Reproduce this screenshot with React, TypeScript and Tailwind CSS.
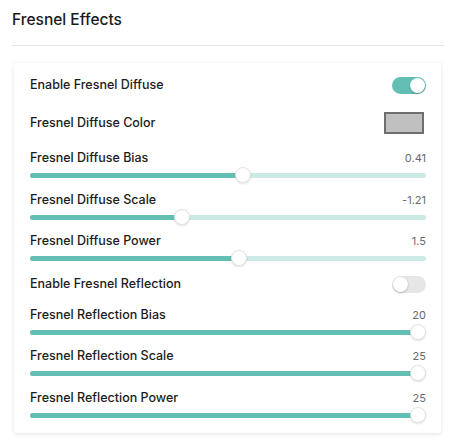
import React, { useState } from "react";

// ==== Types ====
type SliderProps = {
  label: string;
  value: number;
  pct: number; // 0..1 position of the thumb
  className?: string; // spacing above the row
};

// ==== Pieces ====
const Toggle: React.FC<{ on: boolean; onChange: () => void }> = ({ on, onChange }) => (
  <button
    onClick={onChange}
    className={`relative h-[17px] w-[34px] rounded-full ${on ? "bg-[#63bfb3]" : "bg-[#e6e6e6]"}`}
  >
    <span
      className={`absolute top-[1px] h-[15px] w-[15px] rounded-full bg-white shadow-[0_1px_2px_rgba(0,0,0,0.25)] ${
        on ? "left-[18px]" : "left-[1px]"
      }`}
    />
  </button>
);

const Slider: React.FC<SliderProps> = ({ label, value, pct, className }) => (
  <div className={className}>
    <div className="flex h-4 items-center justify-between">
      <span className="text-[12.5px] font-medium text-[#1c1c1c]">{label}</span>
      <span className="text-[11px] text-[#6b6b6b]">{value}</span>
    </div>
    <div className="relative mt-px h-4">
      <div className="absolute left-0 right-0 top-[5.5px] h-[5px] rounded-full bg-[#cbe9e5]" />
      <div
        className="absolute left-0 top-[5.5px] h-[5px] rounded-full bg-[#63bfb3]"
        style={{ width: `calc(${pct} * (100% - 16px) + 8px)` }}
      />
      <div
        className="absolute top-0 h-4 w-4 rounded-full border border-[#e2e2e2] bg-white shadow-[0_1px_2px_rgba(0,0,0,0.12)]"
        style={{ left: `calc(${pct} * (100% - 16px))` }}
      />
    </div>
  </div>
);

// ==== Component ====
export default function App() {
  const [diffuse, setDiffuse] = useState(true);
  const [reflection, setReflection] = useState(false);

  return (
    <div
      className="min-h-screen bg-white pl-3 pr-[14px] pt-[10px]"
      style={{ fontFamily: "Inter, 'Liberation Sans', sans-serif" }}
    >
      <h2 className="text-[15.5px] font-medium leading-5 text-[#1a1a1a]">Fresnel Effects</h2>
      <div className="mt-[15px] h-px bg-[#e4e4e4]" />

      <div className="ml-[2px] mr-[3px] mt-[17px] flex flex-col rounded-[3px] bg-white pb-[10px] pl-4 pr-[15px] pt-3 shadow-[0_1px_4px_rgba(0,0,0,0.12)]">
        <div className="flex h-5 items-center justify-between">
          <span className="text-[12.5px] font-medium text-[#1c1c1c]">Enable Fresnel Diffuse</span>
          <Toggle on={diffuse} onChange={() => setDiffuse(!diffuse)} />
        </div>

        <div className="mt-[17px] flex h-[22px] items-center justify-between">
          <span className="text-[12.5px] font-medium text-[#1c1c1c]">Fresnel Diffuse Color</span>
          <div className="mr-[2px] h-[22px] w-[40px] border-2 border-[#6e6e6e] bg-[#c0c0c0]" />
        </div>

        <Slider className="mt-4" label="Fresnel Diffuse Bias" value={0.41} pct={0.54} />
        <Slider className="mt-[9px]" label="Fresnel Diffuse Scale" value={-1.21} pct={0.378} />
        <Slider className="mt-2" label="Fresnel Diffuse Power" value={1.5} pct={0.528} />

        <div className="mt-2 flex h-5 items-center justify-between">
          <span className="text-[12.5px] font-medium text-[#1c1c1c]">Enable Fresnel Reflection</span>
          <Toggle on={reflection} onChange={() => setReflection(!reflection)} />
        </div>

        <Slider className="mt-[13px]" label="Fresnel Reflection Bias" value={20} pct={1} />
        <Slider className="mt-2" label="Fresnel Reflection Scale" value={25} pct={1} />
        <Slider className="mt-[9px]" label="Fresnel Reflection Power" value={25} pct={1} />
      </div>
    </div>
  );
}
